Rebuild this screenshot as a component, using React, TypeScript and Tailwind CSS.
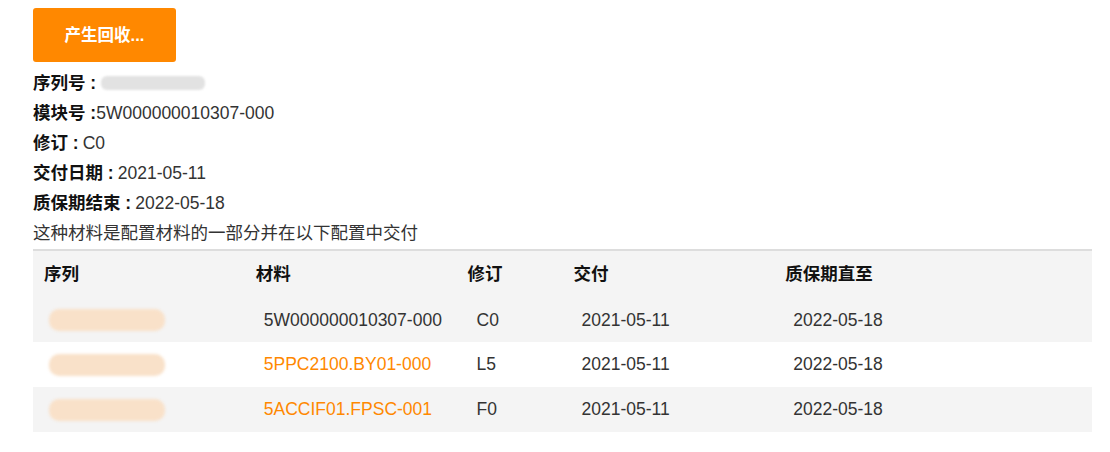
import React from "react";

const font = { fontFamily: '"Liberation Sans", Arial, "Noto Sans CJK SC", sans-serif' };

const rows = [
  { mat: "5W000000010307-000", link: false, rev: "C0", bg: "bg-[#f4f4f4]", h: "h-[44px]" },
  { mat: "5PPC2100.BY01-000", link: true, rev: "L5", bg: "bg-white", h: "h-[45px]" },
  { mat: "5ACCIF01.FPSC-001", link: true, rev: "F0", bg: "bg-[#f4f4f4]", h: "h-[45px]" },
];

export default function App() {
  return (
    <div className="w-[1110px] h-[452px] bg-white pl-[33px] pt-[8px] text-[17.5px] text-[#333]" style={font}>
      <button className="w-[143px] h-[54px] rounded-[3px] bg-[#ff8800] text-white font-bold text-[16.5px] flex items-center justify-center">
        产生回收...
      </button>
      <div className="mt-[6px] flex flex-col">
        <div className="h-[30px] flex items-center">
          <span className="font-bold text-[#111]">序列号 :</span>
          <div className="ml-[5px] w-[104px] h-[14px] rounded-[6px] bg-[#e2e2e2] blur-[1px]" />
        </div>
        <div className="h-[30px] flex items-center">
          <span className="font-bold text-[#111]">模块号 :</span>
          <span>5W000000010307-000</span>
        </div>
        <div className="h-[30px] flex items-center">
          <span className="font-bold text-[#111]">修订 : </span>
          <span className="ml-[4px]">C0</span>
        </div>
        <div className="h-[30px] flex items-center">
          <span className="font-bold text-[#111]">交付日期 : </span>
          <span className="ml-[4px]">2021-05-11</span>
        </div>
        <div className="h-[30px] flex items-center">
          <span className="font-bold text-[#111]">质保期结束 : </span>
          <span className="ml-[4px]">2022-05-18</span>
        </div>
        <div className="h-[30px] flex items-center">这种材料是配置材料的一部分并在以下配置中交付</div>
      </div>
      <div className="w-[1059px] mt-[1px] border-t-2 border-[#dddddd]">
        <div className="flex h-[47px] items-center bg-[#f4f4f4] font-bold text-[#111]">
          <div className="w-[20%] pl-[11px]">序列</div>
          <div className="w-[20%] pl-[11px]">材料</div>
          <div className="w-[10%] pl-[11px]">修订</div>
          <div className="w-[20%] pl-[11px]">交付</div>
          <div className="w-[30%] pl-[11px]">质保期直至</div>
        </div>
        {rows.map((r, i) => (
          <div key={i} className={`flex ${r.h} items-center ${r.bg}`}>
            <div className="w-[20%] pl-[16px]">
              <div className="w-[116px] h-[22px] rounded-[10px] bg-[#f9e1c9] blur-[1.5px]" />
            </div>
            <div className={`w-[20%] pl-[19px] ${r.link ? "text-[#ff8800]" : ""}`}>{r.mat}</div>
            <div className="w-[10%] pl-[20px]">{r.rev}</div>
            <div className="w-[20%] pl-[19px]">2021-05-11</div>
            <div className="w-[30%] pl-[19px]">2022-05-18</div>
          </div>
        ))}
      </div>
    </div>
  );
}
